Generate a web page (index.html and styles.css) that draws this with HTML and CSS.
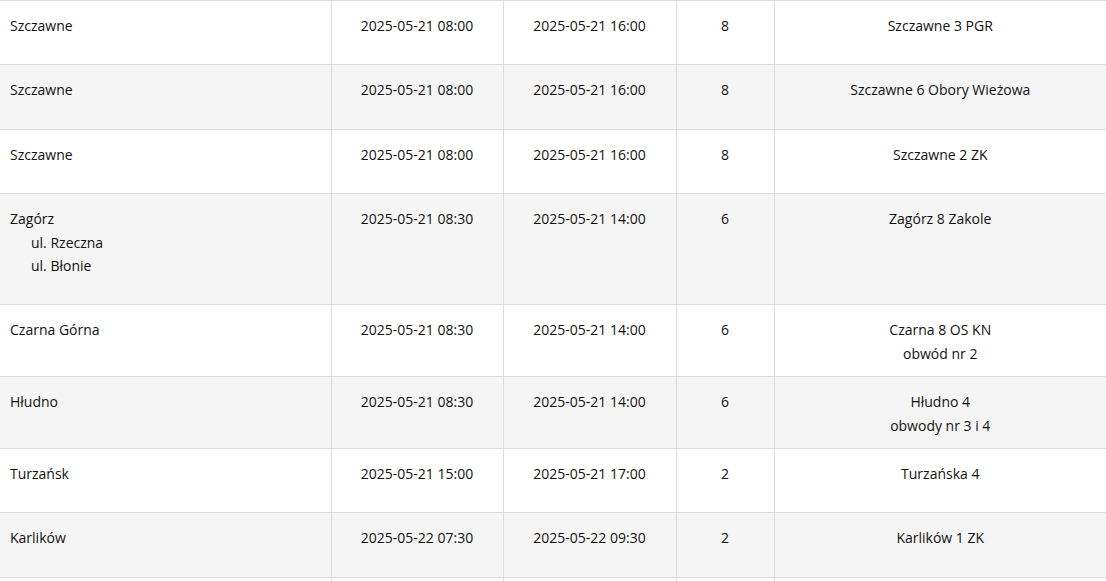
FILE: index.html
```html
<!DOCTYPE html>
<html lang="pl">
<head>
<meta charset="utf-8">
<link rel="stylesheet" href="styles.css">
</head>
<body>
<table class="schedule">
  <colgroup>
    <col class="c-place"><col class="c-start"><col class="c-end"><col class="c-hours"><col class="c-station">
  </colgroup>
  <tbody>
    <tr>
      <td class="place"><p>Szczawne</p></td>
      <td>2025-05-21 08:00</td><td>2025-05-21 16:00</td><td>8</td>
      <td>Szczawne 3 PGR</td>
    </tr>
    <tr>
      <td class="place"><p>Szczawne</p></td>
      <td>2025-05-21 08:00</td><td>2025-05-21 16:00</td><td>8</td>
      <td>Szczawne 6 Obory Wieżowa</td>
    </tr>
    <tr>
      <td class="place"><p>Szczawne</p></td>
      <td>2025-05-21 08:00</td><td>2025-05-21 16:00</td><td>8</td>
      <td>Szczawne 2 ZK</td>
    </tr>
    <tr>
      <td class="place"><p>Zagórz<span class="street">ul. Rzeczna</span><span class="street">ul. Błonie</span></p></td>
      <td>2025-05-21 08:30</td><td>2025-05-21 14:00</td><td>6</td>
      <td>Zagórz 8 Zakole</td>
    </tr>
    <tr>
      <td class="place"><p>Czarna Górna</p></td>
      <td>2025-05-21 08:30</td><td>2025-05-21 14:00</td><td>6</td>
      <td>Czarna 8 OS KN<br>obwód nr 2</td>
    </tr>
    <tr>
      <td class="place"><p>Hłudno</p></td>
      <td>2025-05-21 08:30</td><td>2025-05-21 14:00</td><td>6</td>
      <td>Hłudno 4<br>obwody nr 3 i 4</td>
    </tr>
    <tr>
      <td class="place"><p>Turzańsk</p></td>
      <td>2025-05-21 15:00</td><td>2025-05-21 17:00</td><td>2</td>
      <td>Turzańska 4</td>
    </tr>
    <tr>
      <td class="place"><p>Karlików</p></td>
      <td>2025-05-22 07:30</td><td>2025-05-22 09:30</td><td>2</td>
      <td>Karlików 1 ZK</td>
    </tr>
    <tr>
      <td class="place"><p>&nbsp;</p></td>
      <td></td><td></td><td></td><td></td>
    </tr>
  </tbody>
</table>
</body>
</html>
```
FILE: styles.css
```css
html, body {
  margin: 0;
  padding: 0;
  background: #fff;
}
body {
  font-family: "Open Sans", "Liberation Sans", sans-serif;
  font-size: 14px;
  color: #111;
}
.schedule {
  width: 1106px;
  border-collapse: collapse;
  table-layout: fixed;
}
.c-place { width: 331px; }
.c-start { width: 172px; }
.c-end { width: 173px; }
.c-hours { width: 98px; }
.c-station { width: 332px; }
.schedule td {
  border: 1px solid #dcdcdc;
  padding: 13px 10px 11px;
  line-height: 23.4px;
  vertical-align: top;
  text-align: center;
}
.schedule td:first-child { border-left: none; }
.schedule td:last-child { border-right: none; }
.schedule tr:nth-child(even) td { background: #f5f5f5; }
.schedule td.place { text-align: left; }
.place p { margin: 0 0 16px; }
.street {
  display: block;
  padding-left: 21px;
}
```
